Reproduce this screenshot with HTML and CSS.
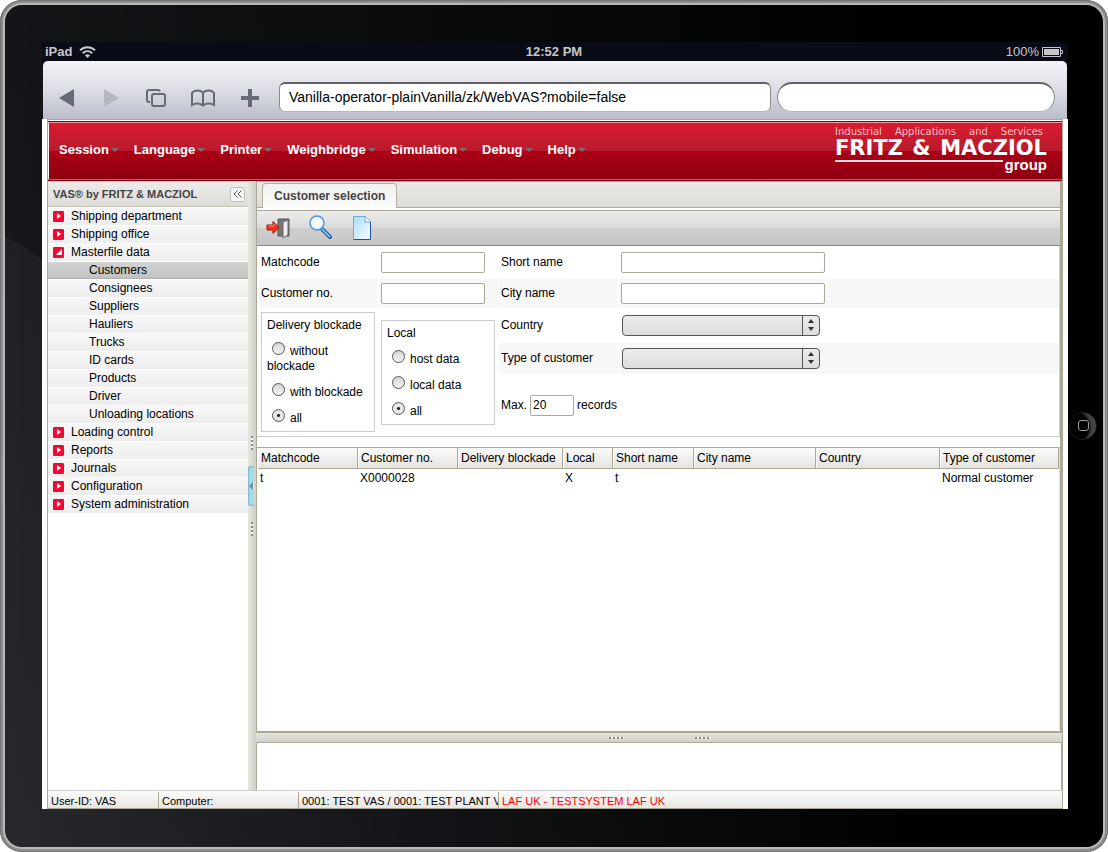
FILE: index.html
```html
<!DOCTYPE html>
<html lang="en">
<head>
<meta charset="utf-8">
<meta name="viewport" content="width=device-width, initial-scale=1">
<title>Customer selection</title>
<link rel="stylesheet" href="styles.css">
</head>
<body>
<div class="device">
<div class="bezel">
<div class="screen">
  <div class="ios-status">
    <div class="ios-left">iPad
      <svg width="17" height="12" viewBox="0 0 17 12" fill="none" stroke="#c6c7ca" stroke-width="2"><path d="M1 4.3C5.3.2 11.7.2 16 4.3M3.7 7.2c2.8-2.6 6.800-2.600 9.600 0"/><path d="M8.500 12 5.900 9.300c1.500-1.300 3.700-1.300 5.200 0z" fill="#c6c7ca" stroke="none"/></svg>
    </div>
    <div class="ios-time">12:52 PM</div>
    <div class="ios-right">100%
      <svg width="21" height="10" viewBox="0 0 21 10"><path d="M.5.5h18v9h-18zM18.500 3.500h2v3h-2" fill="none" stroke="#c6c7ca"/><path d="M2 2h15v6H2z" fill="#c6c7ca"/></svg>
    </div>
  </div>
  <div class="browser">
    <div class="browser-tools">
      <button class="tool" aria-label="Back"><svg width="20" height="20" viewBox="0 0 20 20"><path d="M2 10 17 1v18z" fill="#656b75"/></svg></button>
      <button class="tool" aria-label="Forward"><svg width="20" height="20" viewBox="0 0 20 20"><path d="M18 10 3 1v18z" fill="#b4b7be"/></svg></button>
      <button class="tool" aria-label="Pages"><svg width="22" height="20" viewBox="0 0 22 20" fill="none" stroke="#656b75" stroke-width="2"><path d="M5 14H4a2 2 0 0 1-2-2V4a2 2 0 0 1 2-2h9a2 2 0 0 1 2 1.500"/><rect x="7" y="6" width="13" height="12" rx="2"/></svg></button>
      <button class="tool" aria-label="Bookmarks"><svg width="26" height="20" viewBox="0 0 26 20" fill="none" stroke="#656b75" stroke-width="2"><path d="M13 17.500C10.500 15 5 14.800 2 17V5c2.500-3.300 8.500-3.500 11 0 2.500-3.500 8.500-3.300 11 0v12c-3-2.200-8.500-2-11 .5zM13 5v12"/></svg></button>
      <button class="tool" aria-label="Add"><svg width="20" height="20" viewBox="0 0 20 20"><path d="M8 1h4v7h7v4h-7v7H8v-7H1V8h7z" fill="#656b75"/></svg></button>
    </div>
    <input class="address" type="text" aria-label="Address" value="Vanilla-operator-plainVanilla/zk/WebVAS?mobile=false">
    <input class="search" type="text" aria-label="Search">
  </div>

  <div class="page">
  <div class="app">
    <header class="banner">
      <nav class="menu">
        <button class="menu-item">Session</button>
        <button class="menu-item">Language</button>
        <button class="menu-item">Printer</button>
        <button class="menu-item">Weighbridge</button>
        <button class="menu-item">Simulation</button>
        <button class="menu-item">Debug</button>
        <button class="menu-item">Help</button>
      </nav>
      <div class="logo">
        <div class="logo-tag"><span>Industrial</span><span>Applications</span><span>and</span><span>Services</span></div>
        <div class="logo-name"><span>FRITZ</span><span>&amp;</span><span>MACZIOL</span></div>
        <div class="logo-foot"><span class="logo-rule"></span><span class="logo-group">group</span></div>
      </div>
    </header>

    <div class="body">
      <aside class="sidebar">
        <div class="sidebar-head">
          <span>VAS® by FRITZ &amp; MACZIOL</span>
          <button class="collapse" aria-label="Collapse"><svg width="9" height="8" viewBox="0 0 9 8" fill="none" stroke="#555"><path d="M4.500 0.500 1 4l3.500 3.500M8.500.5 5 4l3.500 3.500"/></svg></button>
        </div>
        <ul class="tree">
          <li class="node"><span class="mark"></span>Shipping department</li>
          <li class="node"><span class="mark"></span>Shipping office</li>
          <li class="node"><span class="mark open"></span>Masterfile data</li>
          <li class="node leaf selected">Customers</li>
          <li class="node leaf">Consignees</li>
          <li class="node leaf">Suppliers</li>
          <li class="node leaf">Hauliers</li>
          <li class="node leaf">Trucks</li>
          <li class="node leaf">ID cards</li>
          <li class="node leaf">Products</li>
          <li class="node leaf">Driver</li>
          <li class="node leaf">Unloading locations</li>
          <li class="node"><span class="mark"></span>Loading control</li>
          <li class="node"><span class="mark"></span>Reports</li>
          <li class="node"><span class="mark"></span>Journals</li>
          <li class="node"><span class="mark"></span>Configuration</li>
          <li class="node"><span class="mark"></span>System administration</li>
        </ul>
      </aside>
      <div class="splitter-v">
        <span class="dots-v"></span>
        <button class="handle" aria-label="Toggle sidebar"><svg width="5" height="8" viewBox="0 0 5 8"><path d="M0 4 4 0v8z" fill="#6f8f99"/><path d="M4.500 0v8" stroke="#e8f6fa"/></svg></button>
        <span class="dots-v"></span>
      </div>

      <main class="main">
        <section class="upper">
          <div class="tabs"><button class="tab">Customer selection</button></div>
          <div class="toolbar">
            <button class="action" aria-label="Exit"><svg width="24" height="22" viewBox="0 0 24 22"><path d="M12 2h11v17H12z" fill="#777" stroke="#555"/><path d="M17 5l5-2v15l-5 3z" fill="#eee" stroke="#666"/><path d="M1 8h6V4.500l6 6-6 6V13H1z" fill="#f0301f" stroke="#a31208"/><path d="M2 9h6V7" fill="none" stroke="#ff8a7d"/></svg></button>
            <button class="action" aria-label="Search"><svg width="24" height="26" viewBox="0 0 24 26"><path d="M14 14l8 8" stroke="#2465b5" stroke-width="4" stroke-linecap="round"/><path d="M14 14l8 8" stroke="#a9d0f5" stroke-width="1.500"/><circle cx="9" cy="8" r="7" fill="#eef6fd" stroke="#4d96df" stroke-width="1.500"/><circle cx="9" cy="8" r="4.500" fill="#fff" opacity=".7"/></svg></button>
            <button class="action" aria-label="New"><svg width="22" height="25" viewBox="-2 0 22 25"><defs><linearGradient id="sheet" x1="0" y1="0" x2="1" y2="1"><stop offset="0" stop-color="#a9dcfb"/><stop offset="1" stop-color="#fbfeff"/></linearGradient></defs><path d="M1.500.5h12l5 5v18h-17z" fill="url(#sheet)" stroke="#6aaae6"/><path d="M1.500 23.500h17v-18" fill="none" stroke="#1c55a8"/><path d="M13 .5V6h5.500" fill="#fff" stroke="#62a5e4"/></svg></button>
          </div>

          <form class="form">
            <div class="cell a1"><label for="match">Matchcode</label></div>
            <div class="cell b1"><input class="box short" id="match" type="text"></div>
            <div class="cell c1"><label for="sname">Short name</label></div>
            <div class="cell d1"><input class="box long" id="sname" type="text"></div>
            <div class="cell a2 shade"><label for="cno">Customer no.</label></div>
            <div class="cell b2 shade"><input class="box short" id="cno" type="text"></div>
            <div class="cell c2 shade"><label for="city">City name</label></div>
            <div class="cell d2 shade"><input class="box long" id="city" type="text"></div>
            <div class="cell a3">
              <div class="group" role="radiogroup" aria-labelledby="g1">
                <div id="g1">Delivery blockade</div>
                <label class="choice"><input type="radio" name="block">without blockade</label>
                <label class="choice"><input type="radio" name="block">with blockade</label>
                <label class="choice"><input type="radio" name="block" checked>all</label>
              </div>
            </div>
            <div class="cell b3">
              <div class="group" role="radiogroup" aria-labelledby="g2">
                <div id="g2">Local</div>
                <label class="choice"><input type="radio" name="local">host data</label>
                <label class="choice"><input type="radio" name="local">local data</label>
                <label class="choice"><input type="radio" name="local" checked>all</label>
              </div>
            </div>
            <div class="cell c3"><label for="country">Country</label></div>
            <div class="cell d3"><span class="picker"><select id="country"><option></option></select><svg width="18" height="21" viewBox="0 0 18 21"><path d="M.5 0v21" stroke="#555"/><path d="M9 4l3 4H6zM9 16l3-4H6z" fill="#333"/></svg></span></div>
            <div class="cell c4 shade"><label for="ctype">Type of customer</label></div>
            <div class="cell d4 shade"><span class="picker"><select id="ctype"><option></option></select><svg width="18" height="21" viewBox="0 0 18 21"><path d="M.5 0v21" stroke="#555"/><path d="M9 4l3 4H6zM9 16l3-4H6z" fill="#333"/></svg></span></div>
            <div class="cell c5"><label for="max">Max.</label><input class="box tiny" id="max" type="text" value="20"><span>records</span></div>
          </form>

          <div class="results">
            <table class="list">
              <colgroup><col class="w-a"><col class="w-a"><col class="w-b"><col class="w-c"><col class="w-d"><col class="w-e"><col class="w-f"><col></colgroup>
              <thead><tr><th>Matchcode</th><th>Customer no.</th><th>Delivery blockade</th><th>Local</th><th>Short name</th><th>City name</th><th>Country</th><th>Type of customer</th></tr></thead>
              <tbody><tr><td>t</td><td>X0000028</td><td></td><td>X</td><td>t</td><td></td><td></td><td>Normal customer</td></tr></tbody>
            </table>
          </div>
        </section>
        <div class="splitter-h"><span class="dots-h"></span><span class="dots-h"></span></div>
        <section class="lower"></section>
      </main>
    </div>

    <footer class="statusbar">
      <div class="stat s1">User-ID: VAS</div>
      <div class="stat s2">Computer:</div>
      <div class="stat s3">0001: TEST VAS / 0001: TEST PLANT VA</div>
      <div class="stat alert">LAF UK - TESTSYSTEM LAF UK</div>
    </footer>
  </div>
  </div>
</div>
<div class="bezel-right">
  <button class="home" aria-label="Home"><span class="home-mark"></span></button>
</div>
</div>
</div>
</body>
</html>
```
FILE: styles.css
```css
* { box-sizing: border-box; }
body {
  margin: 0;
  background: #fff;
  font: 12px/15px "Liberation Sans", Arial, sans-serif;
  color: #000;
}
button, input, select { font: inherit; color: inherit; margin: 0; }
button { border: 0; padding: 0; background: none; }
svg { display: block; }

/* Tablet shell */
.device {
  display: flex;
  min-height: 100vh;
  padding: 5px;
  border-radius: 22px;
  background: #8b8b8b;
  box-shadow: inset 0 0 0 1px #747474, inset 0 0 0 3px #8d8d8d, inset 0 0 0 5px #b9b9b9;
}
.bezel {
  flex: 1;
  display: flex;
  min-width: 0;
  padding: 37px 0 38px 37px;
  border-radius: 17px;
  background:
    linear-gradient(to right, transparent, #000 85%),
    linear-gradient(212deg, #0e0f11 0, #15171a 60%, #1e2025 60%, #27292e 100%);
}
.bezel-right { flex: none; width: 35px; display: flex; align-items: center; }
.home {
  width: 28px;
  height: 28px;
  margin-left: 1px;
  display: grid;
  place-items: center;
  border-radius: 50%;
  border: 1px solid #1c1c1c;
  background: radial-gradient(circle at 4px 14px, #000 15px, #3a3a3a 17px, #555 24px);
}
.home-mark { width: 11px; height: 11px; border: 1px solid #999; border-radius: 3px; }

.screen { flex: 1; min-width: 0; display: flex; flex-direction: column; }
.ios-status {
  display: grid;
  grid-template-columns: 1fr auto 1fr;
  align-items: center;
  height: 19px;
  padding: 0 5px 0 3px;
  background: #090c16;
  color: #c6c7ca;
  font-size: 13px;
  font-weight: bold;
}
.ios-left, .ios-right { display: flex; align-items: center; gap: 7px; }
.ios-right { justify-content: flex-end; gap: 3px; font-weight: normal; }

/* Browser chrome */
.browser {
  display: grid;
  grid-template-columns: 216px 492fr 278fr;
  gap: 6px;
  align-items: start;
  height: 58px;
  margin: 0 1px;
  padding: 14px 12px 0 14px;
  border-radius: 5px 5px 0 0;
  background: linear-gradient(#f5f5f8, #dcdde4 50%, #b9bdca);
}
.browser-tools { display: flex; justify-content: space-between; align-items: center; height: 46px; padding-right: 13px; }
.address, .search {
  min-width: 0;
  height: 30px;
  margin-top: 7px;
  padding: 0 9px 2px;
  border: 1px solid #8a8c92;
  border-top: 2px solid #606268;
  border-bottom-color: #b5b7bd;
  border-radius: 6px;
  background: #fff;
  font-size: 14px;
  outline: 0;
}
.search { border-radius: 15px; }

/* Web application */
.page { flex: 1; display: flex; padding: 0 5px; background: #fff; }
.app {
  flex: 1;
  min-width: 0;
  display: flex;
  flex-direction: column;
  border: 1px solid #aba897;
}
.banner {
  display: flex;
  justify-content: space-between;
  height: 60px;
  margin-top: 1px;
  padding: 0 15px 0 11px;
  border-top: 1px solid #7e0011;
  border-bottom: 1px solid #7e0011;
  box-shadow: inset 0 1px #f29aa2, inset 0 -1px #c95766, inset 1px 0 #fff;
  background: linear-gradient(#dc1b31, #b81a2d 50%, #ad0016 50%, #8c0012);
}
.menu { display: flex; gap: 15px; align-items: center; padding-bottom: 4px; }
.menu-item { display: flex; align-items: center; gap: 2px; color: #fff; font-size: 13px; font-weight: bold; }
.menu-item::after { content: ""; border: 4px solid transparent; border-top-color: #7b6b6b; border-bottom: 0; margin-top: 2px; }
.logo { width: 212px; padding-top: 4px; color: #fff; }
.logo-tag { display: flex; justify-content: space-between; padding-right: 4px; font: 10px/12px "DejaVu Sans", sans-serif; color: #f3c3c8; }
.logo-name { display: flex; justify-content: space-between; font: bold 21px/20px "DejaVu Sans", sans-serif; }
.logo-foot { display: flex; gap: 2px; }
.logo-rule { flex: 1; height: 2px; margin-top: 2px; background: #f6dfe1; }
.logo-group { font-size: 15px; line-height: 14px; font-weight: bold; }

.body { flex: 1; display: flex; }
.sidebar { flex: none; width: 200px; border-top: 1px solid #c9c7bd; }
.sidebar-head {
  display: flex;
  align-items: center;
  justify-content: space-between;
  height: 25px;
  padding: 0 3px 0 5px;
  border-bottom: 1px solid #c5c3b8;
  background: linear-gradient(#ecebea, #dddcd7);
  color: #444;
  font-size: 11px;
  font-weight: bold;
}
.collapse { display: grid; place-items: center; width: 15px; height: 15px; border: 1px solid #c4c1b6; border-radius: 3px; background: #fafafa; }
.tree { margin: 0; padding: 0; list-style: none; }
.node {
  display: flex;
  align-items: center;
  gap: 7px;
  height: 18px;
  padding: 0 5px 1px;
  border-top: 1px solid #fff;
  background: linear-gradient(#f7f7f7, #ededed);
}
.leaf { padding-left: 41px; }
.selected { background: linear-gradient(#d3d3d3, #c3c3c3 90%, #aaa); }
.mark { display: grid; place-items: center; width: 11px; height: 11px; border: 1px solid #c9193a; border-radius: 1px; background: #ee0a35; }
.mark::before { content: ""; border: 3px solid transparent; border-left: 4px solid #fff; border-right: 0; }
.mark.open::before { border: 0; border-bottom: 6px solid #fff; border-left: 6px solid transparent; }

.splitter-v {
  flex: none;
  width: 8px;
  display: flex;
  flex-direction: column;
  align-items: center;
  justify-content: center;
  gap: 16px;
  background: linear-gradient(to right, #e6e6e2, #d0cfc8);
}
.dots-v { width: 2px; height: 14px; background: repeating-linear-gradient(#8d8b7d 0 2px, #f4f4f0 2px 4px); }
.handle { display: grid; place-items: center; align-self: flex-start; width: 6px; height: 40px; border: 1px solid #84b8c8; border-right: 0; border-radius: 3px 0 0 3px; background: #9fdcea; }

.main { flex: 1; min-width: 0; display: flex; flex-direction: column; }
.upper { flex: 1; display: flex; flex-direction: column; border: 1px solid #aba897; border-right-width: 2px; border-bottom-width: 2px; }
.tabs { height: 26px; padding: 1px 5px 0; border-bottom: 1px solid #aba897; background: linear-gradient(#ebeae8, #dcdbd5); }
.tab {
  height: 25px;
  padding: 0 11px;
  border: 1px solid #b3b0a3;
  border-bottom: 0;
  border-radius: 4px 4px 0 0;
  background: linear-gradient(#f1f1ef, #fbfbfa);
  color: #444;
  font-weight: bold;
}
.toolbar {
  display: flex;
  align-items: center;
  gap: 18px;
  height: 36px;
  margin-top: 2px;
  padding: 0 9px;
  border-top: 1px solid #aba897;
  border-bottom: 1px solid #888;
  background: linear-gradient(#ececec, #dadada 50%, #cfcfcf 50%, #c6c6c6);
}

.form {
  display: grid;
  grid-template-columns: 119px 119px 119px 1fr;
  grid-template-rows: 33px 29px 35px 31px 62px;
  column-gap: 1px;
  padding-left: 2px;
  border-right: 1px solid #ccc;
  border-bottom: 1px solid #ccc;
}
.cell { display: flex; align-items: center; padding: 0 2px; }
.shade { background: #f7f7f7; }
.a1 { grid-area: 1 / 1; } .b1 { grid-area: 1 / 2; } .c1 { grid-area: 1 / 3; } .d1 { grid-area: 1 / 4; }
.a2 { grid-area: 2 / 1; } .b2 { grid-area: 2 / 2; } .c2 { grid-area: 2 / 3; } .d2 { grid-area: 2 / 4; }
.a3 { grid-area: 3 / 1 / 6 / 2; } .b3 { grid-area: 3 / 2 / 6 / 3; }
.c3 { grid-area: 3 / 3; } .d3 { grid-area: 3 / 4; }
.c4 { grid-area: 4 / 3; } .d4 { grid-area: 4 / 4; }
.c5 { grid-area: 5 / 3 / 6 / 5; gap: 3px; }
.box { height: 21px; padding: 0 2px; border: 1px solid #aba897; border-radius: 2px; background: #fff; }
.short { width: 104px; }
.long { width: 204px; }
.tiny { width: 44px; }
.group { width: 114px; padding: 5px; border: 1px solid #ccc; }
.choice { display: block; margin-top: 9px; }
.choice input {
  appearance: none;
  width: 13px;
  height: 13px;
  margin: 0 5px;
  border: 1px solid #555;
  border-radius: 50%;
  background: linear-gradient(#d5d5d5, #f4f4f4);
  vertical-align: 0;
}
.choice input:checked { background: radial-gradient(circle, #222 0 1px, #e6e6e6 2px); }
.picker { display: grid; width: 198px; margin-left: 1px; }
.picker select {
  grid-area: 1 / 1;
  appearance: none;
  height: 21px;
  border: 1px solid #555;
  border-radius: 4px;
  background: linear-gradient(#ececec, #dcdcdc);
}
.picker svg { grid-area: 1 / 1; justify-self: end; pointer-events: none; }

.results { flex: 1; margin-top: 10px; padding-left: 1px; border-top: 1px solid #aba897; border-right: 1px solid #ddd; }
.list { width: 100%; table-layout: fixed; border-collapse: separate; border-spacing: 0; text-align: left; }
.list th {
  height: 21px;
  padding: 0 0 0 3px;
  border-right: 1px solid #aba897;
  border-bottom: 1px solid #aba897;
  background: linear-gradient(#fbfbfa, #e4e3e0);
  font-weight: normal;
  white-space: nowrap;
  box-shadow: inset 1px 0 #fff;
}
.list td { height: 18px; padding: 0 2px; }
.w-a { width: 100px; } .w-b { width: 105px; } .w-c { width: 50px; } .w-d { width: 81px; } .w-e { width: 122px; } .w-f { width: 124px; }

.splitter-h { display: flex; align-items: center; justify-content: center; gap: 71px; height: 9px; background: linear-gradient(#e4e4e0, #d2d1ca); }
.dots-h { width: 15px; height: 2px; background: repeating-linear-gradient(to right, #8d8b7d 0 2px, #f4f4f0 2px 4px); }
.lower { height: 48px; border: 1px solid #aba897; border-bottom: 0; }

.statusbar { display: flex; height: 18px; border-top: 1px solid #ccc; background: linear-gradient(#fcfcfb, #e6e5e2); font-size: 11px; }
.stat { margin-top: 1px; padding: 2px 3px 0; line-height: 14px; white-space: nowrap; overflow: hidden; border-right: 1px solid #aba897; }
.s1 { flex: none; width: 111px; }
.s2 { flex: none; width: 140px; }
.s3 { flex: none; width: 200px; }
.alert { flex: 1; border-right: 0; color: #f00; }
```
